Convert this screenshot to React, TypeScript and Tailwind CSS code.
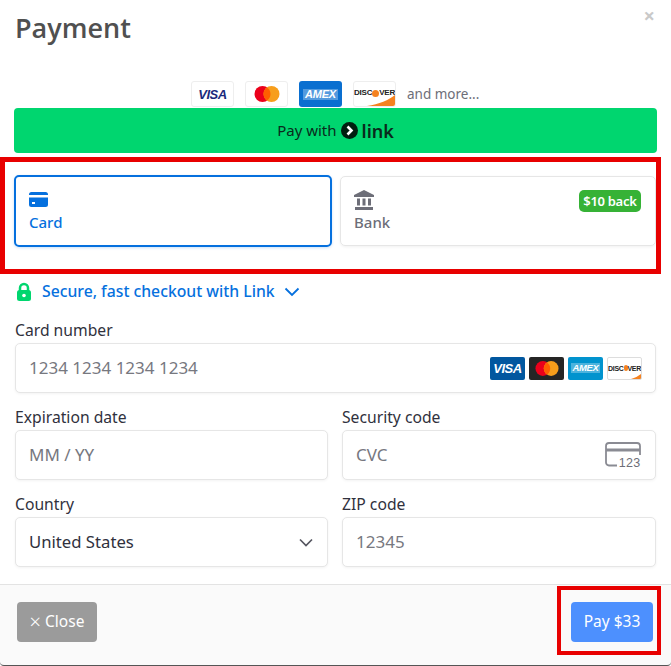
import React from "react";

const fieldShadow = "shadow-[0_1px_3px_rgba(0,0,0,0.05)]";

function VisaLogo({ blue }: { blue?: boolean }) {
  return (
    <span className={`italic font-extrabold font-['Liberation_Sans',sans-serif] leading-none text-[13px] tracking-[-0.5px] ${blue ? "text-white" : "text-[#1a2a7c]"}`}>
      VISA
    </span>
  );
}

function McLogo({ small }: { small?: boolean }) {
  return (
    <svg width={small ? 24 : 26} height={small ? 15 : 16} viewBox="0 0 26 16">
      <circle cx="8.5" cy="8" r="8" fill="#eb001b" />
      <circle cx="17.5" cy="8" r="8" fill="#f79e1b" />
      <path d="M13 1.4a8 8 0 0 1 0 13.2a8 8 0 0 1 0-13.2z" fill="#ff5f00" />
    </svg>
  );
}

function AmexLogo({ small }: { small?: boolean }) {
  return (
    <span
      className={`italic font-black font-['Liberation_Sans',sans-serif] leading-none text-white bg-white/30 ${small ? "text-[9.5px] px-[1px] tracking-[-0.3px]" : "text-[11px] px-[2px] tracking-[-0.2px]"}`}
    >
      AMEX
    </span>
  );
}

function DiscoverLogo({ small }: { small?: boolean }) {
  return (
    <>
      <span
        className={`absolute left-0 right-0 flex justify-center items-center font-bold font-['Liberation_Sans',sans-serif] text-[#222] leading-none ${small ? "top-[7px] text-[7px] tracking-[-0.3px]" : "top-[7px] text-[8px] tracking-[-0.2px]"}`}
      >
        DISC
        <span className={`inline-block rounded-full bg-[#f58220] ${small ? "w-[6px] h-[6px]" : "w-[7px] h-[7px]"}`} />
        VER
      </span>
      <svg className="absolute right-0 bottom-0" width="32" height="12" viewBox="0 0 32 12">
        <path d={small ? "M22 12C26 11 29 9 32 7v5z" : "M4 12C16 10 26 6 32 1v11z"} fill="#f58220" />
      </svg>
    </>
  );
}

function TopBrand({ className, children }: { className?: string; children: React.ReactNode }) {
  return (
    <div className={`relative w-[43px] h-[26px] rounded-[3px] flex items-center justify-center overflow-hidden ${className ?? ""}`}>
      {children}
    </div>
  );
}

function SmallBrand({ className, children }: { className?: string; children: React.ReactNode }) {
  return (
    <div className={`relative w-[35px] h-[23px] rounded-[2px] flex items-center justify-center overflow-hidden ${className ?? ""}`}>
      {children}
    </div>
  );
}

function Field({ label, children, className }: { label: string; children: React.ReactNode; className?: string }) {
  return (
    <div className={className}>
      <div className="text-[15.7px] leading-[21px] text-[#30313d] mb-[2px]">{label}</div>
      <div className={`h-[50px] rounded-[5px] border border-[#e6e6e6] bg-white flex items-center justify-between pl-[13px] pr-[13px] text-[17px] text-[#77787f] ${fieldShadow}`}>
        {children}
      </div>
    </div>
  );
}

export default function App() {
  return (
    <div className="relative w-[671px] h-[666px] bg-white flex flex-col overflow-hidden font-['Noto_Sans',sans-serif]">
      {/* header */}
      <div className="flex justify-between h-[81px] pl-[15px] pr-[16px] shrink-0">
        <h1 className="text-[27px] leading-[36px] pt-[10px] font-semibold font-['Open_Sans',sans-serif] text-[#505050]">Payment</h1>
        <span className="text-[20px] leading-none pt-[6px] font-bold text-[#c9c9c9]">×</span>
      </div>

      <div className="flex items-start gap-[11px] pl-[191px] h-[27px] shrink-0">
        <TopBrand className="border border-[#eeeeee]">
          <VisaLogo />
        </TopBrand>
        <TopBrand className="border border-[#eeeeee]">
          <McLogo />
        </TopBrand>
        <TopBrand className="bg-[#0a6fd0]">
          <AmexLogo />
        </TopBrand>
        <TopBrand className="border border-[#eeeeee]">
          <DiscoverLogo />
        </TopBrand>
        <span className="text-[13.5px] leading-[26px] text-[#6d6e78]">and more...</span>
      </div>

      <div className="mx-[14px] h-[45px] rounded-[4px] bg-[#00d66f] flex items-center justify-center gap-[4px] text-[#0a2a1c] shrink-0">
        <span className="text-[15px]">Pay with</span>
        <svg width="17" height="17" viewBox="0 0 17 17">
          <circle cx="8.5" cy="8.5" r="8.5" fill="#011e0f" />
          <path d="M6.5 4.5 10.5 8.5 6.5 12.5" fill="none" stroke="#ffffff" strokeWidth="2.6" />
        </svg>
        <span className="text-[18px] font-semibold leading-none">link</span>
      </div>

      {/* method tabs */}
      <div className="flex gap-[8px] pl-[14px] pr-[15px] mt-[22px] h-[72px] shrink-0">
        <div className="w-[318px] h-[72px] rounded-[5px] border-2 border-[#0570de] pl-[13px] pt-[14px] text-[#0570de] shadow-[0_1px_3px_rgba(5,112,222,0.2)]">
          <svg width="19" height="16" viewBox="0 0 19 16" className="block">
            <path d="M0 3.5A2.5 2.5 0 0 1 2.5 1h14A2.5 2.5 0 0 1 19 3.5V4H0zM0 6.5h19v7a2.5 2.5 0 0 1-2.5 2.5h-14A2.5 2.5 0 0 1 0 13.5zM3 11v2h3v-2z" fill="#0570de" />
          </svg>
          <div className="text-[15px] leading-[20px] mt-[5px] font-medium">Card</div>
        </div>
        <div className="relative w-[316px] h-[70px] mt-[1px] rounded-[5px] border border-[#e6e6e6] pl-[13px] pt-[13px] text-[#6d6e78] shadow-[0_1px_3px_rgba(0,0,0,0.06)]">
          <svg width="20" height="20" viewBox="0 0 20 20" className="block">
            <path d="M10 0 20 5v2H0V5zM1 17h18v3H1zM3 8.5h3v7H3zM8.5 8.5h3v7h-3zM14 8.5h3v7h-3z" fill="#6d6e78" />
          </svg>
          <div className="text-[15px] leading-[20px] mt-[2px] font-medium">Bank</div>
          <span className="absolute right-[14px] top-[13px] h-[22px] px-[4.5px] rounded-[5px] bg-[#36b236] text-white text-[13px] leading-[22px] font-semibold tracking-[-0.3px]">
            $10 back
          </span>
        </div>
      </div>

      <div className="flex items-center pl-[16px] mt-[33px] h-[24px] shrink-0 text-[#0570de]">
        <svg width="16" height="20" viewBox="0 0 16 20">
          <path d="M4 9V6a4 4 0 0 1 8 0v3" fill="none" stroke="#00d66f" strokeWidth="2.5" />
          <rect x="1" y="8" width="14" height="11" rx="2.5" fill="#00d66f" />
          <circle cx="8" cy="13.5" r="1.8" fill="#ffffff" />
        </svg>
        <span className="ml-[10px] text-[15.75px] font-medium">Secure, fast checkout with Link</span>
        <svg className="ml-[9px]" width="16" height="10" viewBox="0 0 16 10">
          <path d="M1.5 1.5 8 8l6.5-6.5" fill="none" stroke="#0570de" strokeWidth="1.8" />
        </svg>
      </div>

      {/* form */}
      <div className="flex flex-col gap-[14px] pl-[15px] pr-[15px] mt-[16px] shrink-0">
        <Field label="Card number">
          <span>1234 1234 1234 1234</span>
          <div className="flex gap-[4px]">
            <SmallBrand className="bg-[#01579f]">
              <VisaLogo blue />
            </SmallBrand>
            <SmallBrand className="bg-[#252525]">
              <McLogo small />
            </SmallBrand>
            <SmallBrand className="bg-[#0193ce]">
              <AmexLogo small />
            </SmallBrand>
            <SmallBrand className="border border-[#dddddd] bg-white">
              <DiscoverLogo small />
            </SmallBrand>
          </div>
        </Field>
        <div className="grid grid-cols-[313px_314px] gap-x-[14px]">
          <Field label="Expiration date">
            <span>MM / YY</span>
          </Field>
          <Field label="Security code">
            <span>CVC</span>
            <svg width="36" height="28" viewBox="0 0 36 28" className="mr-[1px] mt-[2px]">
              <path d="M12 23.5H4a3 3 0 0 1-3-3V4a3 3 0 0 1 3-3h28a3 3 0 0 1 3 3v9" fill="none" stroke="#8a8b93" strokeWidth="1.8" />
              <rect x="1" y="6.5" width="34" height="3" fill="#8a8b93" />
              <text x="35.5" y="25" textAnchor="end" fontSize="12.5" fontFamily="'Liberation Sans', sans-serif" fill="#6d6e78" letterSpacing="0.3">
                123
              </text>
            </svg>
          </Field>
        </div>
        <div className="grid grid-cols-[313px_314px] gap-x-[14px]">
          <Field label="Country">
            <span className="text-[#30313d] text-[16.7px]">United States</span>
            <svg width="14" height="9" viewBox="0 0 14 9" className="mr-[1px]">
              <path d="M1 1.5 7 7.5l6-6" fill="none" stroke="#555660" strokeWidth="1.7" />
            </svg>
          </Field>
          <Field label="ZIP code">
            <span>12345</span>
          </Field>
        </div>
      </div>

      {/* footer */}
      <div className="mt-[17px] flex-1 bg-[#fafafa] border-t border-[#e3e3e3] border-b border-b-[#555555] rounded-b-[4px] flex items-center justify-between pl-[17px] pr-[18px]">
        <button className="w-[80px] h-[40px] rounded-[4px] bg-[#9b9b9b] text-white text-[15.5px] mb-[6px] flex items-center justify-center gap-[4px]">
          <span className="text-[20px] leading-none font-light">×</span>
          <span>Close</span>
        </button>
        <button className="w-[82px] h-[40px] rounded-[4px] bg-[#4d90fe] text-white text-[15.5px] mb-[6px]">Pay $33</button>
      </div>

      {/* annotations */}
      <div className="absolute left-0 top-[157px] w-[661px] h-[117px] border-[5px] border-[#e80000] pointer-events-none" />
      <div className="absolute left-[557px] top-[586px] w-[104px] h-[69px] border-[4px] border-[#e80000] pointer-events-none" />
    </div>
  );
}
